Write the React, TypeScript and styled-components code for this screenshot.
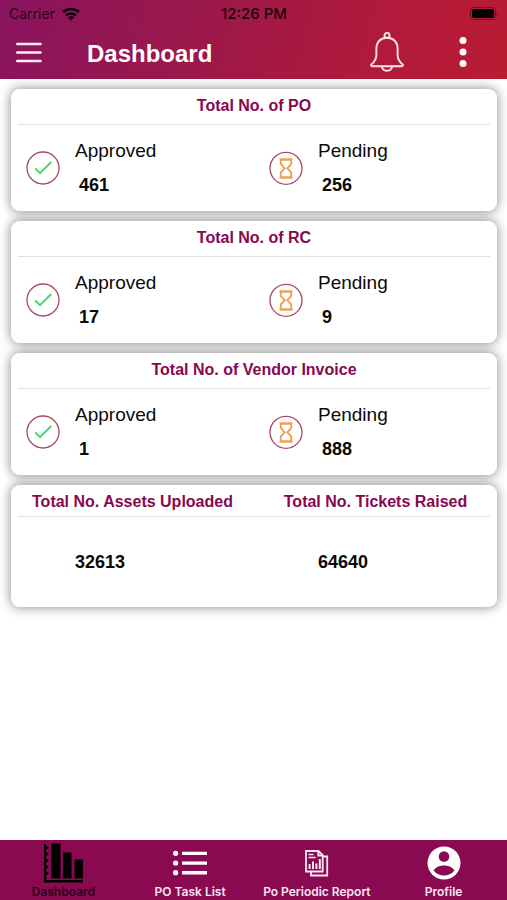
import React from "react";
import styled, { createGlobalStyle } from "styled-components";

const GlobalStyle = createGlobalStyle`
  *, *::before, *::after { box-sizing: border-box; }
  html, body, #root { height: 100%; }
  body {
    margin: 0;
    background: #fff;
    color: #0a0a0a;
    font-family: "Liberation Sans", Arial, sans-serif;
  }
`;

const Screen = styled.div`
  min-height: 100%;
  display: flex;
  flex-direction: column;
`;

const TopArea = styled.header`
  background: linear-gradient(105deg, #8a1460 0%, #9c1849 40%, #b01a3c 72%, #ba1b32 100%);
`;

const StatusBar = styled.div`
  display: grid;
  grid-template-columns: 1fr auto 1fr;
  align-items: center;
  height: 27px;
  padding: 0 8px 0 9px;
  color: rgba(0, 0, 0, 0.78);
  font-family: Inter, sans-serif;
  font-size: 14px;
`;

const Carrier = styled.span`
  display: flex;
  align-items: center;
  gap: 7px;
`;

const Clock = styled.time`
  color: #1c0410;
  font-size: 15px;
  font-weight: 500;
`;

const BatterySlot = styled.span`
  display: flex;
  justify-content: flex-end;
`;

const AppBar = styled.div`
  display: flex;
  align-items: center;
  height: 52px;
  padding: 0 40px 2px 16px;
`;

const Title = styled.h1`
  flex: 1;
  margin: 0;
  padding: 3px 0 0 45px;
  color: #fff;
  font-size: 24px;
  line-height: 28px;
`;

const IconButton = styled.button`
  display: flex;
  justify-content: center;
  padding: 0;
  border: 0;
  background: none;
  color: #fff;
  cursor: pointer;

  & + & {
    margin-left: 55px;
  }
`;

const Cards = styled.main`
  flex: 1;
  display: flex;
  flex-direction: column;
  gap: 10px;
  padding: 10px 10px 10px 11px;
  isolation: isolate;
  overflow: hidden;
`;

const Card = styled.section`
  position: relative;
  display: flex;
  flex-direction: column;
  min-height: 122px;
  border-radius: 9px;
  background: #fff;

  &::before {
    content: "";
    position: absolute;
    inset: 0;
    z-index: -1;
    border-radius: 9px;
    box-shadow: 0 0 11px 1px rgba(0, 0, 0, 0.42);
  }
`;

const CardHead = styled.div<{ $short?: boolean }>`
  display: grid;
  grid-auto-columns: 1fr;
  grid-auto-flow: column;
  align-items: start;
  height: ${(p) => (p.$short ? 31 : 35)}px;
  padding-top: 7px;
`;

const Rule = styled.hr`
  width: calc(100% - 14px);
  height: 1px;
  margin: 0 7px;
  border: 0;
  background: #e2e2e2;
`;

const CardTitle = styled.h2`
  margin: 0;
  color: #880850;
  font-size: 16px;
  line-height: 20px;
  text-align: center;
`;

const Stats = styled.div`
  flex: 1;
  display: grid;
  grid-template-columns: 1fr 1fr;
  align-items: center;
`;

const Stat = styled.div`
  display: flex;
  align-items: center;
  gap: 15px;
  padding-left: 15px;
`;

const StatText = styled.dl`
  margin: 0;
  line-height: 34px;
`;

const StatLabel = styled.dt`
  font-size: 19px;
`;

const StatValue = styled.dd`
  margin: 0;
  padding-left: 4px;
  font-size: 18px;
  font-weight: 700;
`;

const Total = styled.p`
  margin: 0;
  padding-left: 64px;
  font-size: 18px;
  font-weight: 700;
`;

const TabBar = styled.nav`
  display: grid;
  grid-template-columns: repeat(4, 1fr);
  height: 60px;
  background: #8a0a52;
`;

const Tab = styled.a<{ $active?: boolean }>`
  display: flex;
  flex-direction: column;
  align-items: center;
  justify-content: flex-end;
  color: ${(p) => (p.$active ? "#000" : "#fff")};
  text-decoration: none;
`;

const TabIcon = styled.span`
  display: flex;
  align-items: center;
  justify-content: center;
  height: 40px;
`;

const TabLabel = styled.span<{ $active?: boolean }>`
  color: ${(p) => (p.$active ? "#2c0219" : "#fbe6f2")};
  font-family: Inter, sans-serif;
  font-size: 12px;
  font-weight: 600;
  line-height: 17px;
  white-space: nowrap;
`;

const WifiIcon = () => (
  <svg width="18" height="14" viewBox="0 0 18 14" fill="none" stroke="#14020c" strokeWidth="2.5" aria-hidden="true">
    <path d="M1 5.2a11.5 11.5 0 0 1 16 0" />
    <path d="M4 8.4a7.2 7.2 0 0 1 10 0" />
    <path d="M9 13.5 6 10.5a4.3 4.3 0 0 1 6 0Z" fill="#14020c" stroke="none" />
  </svg>
);

const BatteryIcon = () => (
  <svg width="29" height="14" viewBox="0 0 29 14" role="img" aria-label="Battery full">
    <rect x="0.5" y="0.5" width="25" height="12" rx="3.5" fill="none" stroke="#000" strokeOpacity="0.4" />
    <rect x="2" y="2" width="22" height="9" rx="2" fill="#000" />
    <path d="M27 5v4c1.6-.6 1.6-3.4 0-4Z" fill="#000" fillOpacity="0.4" />
  </svg>
);

const MenuIcon = () => (
  <svg width="26" height="22" viewBox="0 0 26 22" stroke="#ffeaf5" strokeWidth="2.4" strokeLinecap="round" aria-hidden="true">
    <path d="M1.2 3h23.400M1.200 11.500h23.400M1.200 20h23.400" />
  </svg>
);

const BellIcon = () => (
  <svg width="34" height="40" viewBox="0 0 34 40" fill="none" stroke="#ffe3e8" strokeWidth="1.9" strokeLinejoin="round" aria-hidden="true">
    <circle cx="17" cy="3.400" r="2.500" />
    <path d="M17 5.800C10.500 5.800 6.400 10.200 6.400 16.500V22.500C6.400 27 5.300 29.300 1.600 32.200C.7 33 1 34.300 2.300 34.300H31.700C33 34.300 33.300 33 32.400 32.200C28.700 29.300 27.600 27 27.600 22.500V16.500C27.600 10.200 23.500 5.800 17 5.800Z" />
    <path d="M12 34.500c.5 5.700 9.500 5.700 10 0" />
  </svg>
);

const MoreIcon = () => (
  <svg width="8" height="32" viewBox="0 0 8 32" fill="#fff" aria-hidden="true">
    <circle cx="4" cy="4.500" r="3.500" />
    <circle cx="4" cy="16" r="3.500" />
    <circle cx="4" cy="27.500" r="3.500" />
  </svg>
);

const ApprovedIcon = () => (
  <svg width="34" height="34" viewBox="0 0 34 34" fill="none" aria-hidden="true">
    <circle cx="17" cy="17" r="16" stroke="#a84a66" strokeWidth="1.300" />
    <path d="m9.300 17.500 4.700 4.700L25.300 11" stroke="#3fdc68" strokeWidth="2" />
  </svg>
);

const PendingIcon = () => (
  <svg width="34" height="34" viewBox="0 0 34 34" fill="none" aria-hidden="true">
    <circle cx="17" cy="17.300" r="16" stroke="#a84a66" strokeWidth="1.300" />
    <path
      d="M11.800 8.500h10.400v4.700L18.300 17.300l3.900 4.100v5.100H11.800v-5.100l3.900-4.100-3.900-4.100Z"
      stroke="#eda055"
      strokeWidth="1.900"
    />
    <path d="M10.600 8.500h12.800M10.600 26.500h12.800" stroke="#eda055" strokeWidth="1.900" />
  </svg>
);

const ChartIcon = () => (
  <svg width="40" height="40" viewBox="0 0 40 40" fill="#000" aria-hidden="true">
    <path d="M1 1h2.200v36H40V39.500H1Z" />
    <path d="M3 3l3 1.500L3 7ZM3 9l3 2-3 2ZM3 15.500l3 2-3 2ZM3 22l3 2-3 2ZM3 28.500l3 2-3 2Z" />
    <rect x="8.500" y="0.500" width="9" height="35" />
    <rect x="20" y="9.500" width="8.500" height="26" />
    <rect x="31.500" y="16.500" width="8.500" height="19" />
  </svg>
);

const ListIcon = () => (
  <svg width="34" height="26" viewBox="0 0 34 26" fill="#fff" aria-hidden="true">
    <circle cx="2.600" cy="3.300" r="2.600" />
    <circle cx="2.600" cy="13" r="2.600" />
    <circle cx="2.600" cy="22.700" r="2.600" />
    <path d="M9 1.700h25V5H9ZM9 11.400h25v3.300H9ZM9 21.100h25v3.300H9Z" />
  </svg>
);

const ReportIcon = () => (
  <svg width="24" height="27" viewBox="0 0 24 27" fill="none" stroke="#ffe6f4" strokeWidth="1.800" aria-hidden="true">
    <path d="M1 1h12.500l4.200 4.200V21.500H1Z" />
    <path d="M13.300 1v4.500h4.400" />
    <path d="M18 6.500h4.200v19H6V21.500" strokeWidth="1.800" />
    <path d="M3.500 4.500h5M3.500 7.500h7" strokeWidth="1.500" />
    <path d="M4.600 19v-5M8 19v-7.500M11.400 19v-5.500M14.800 19V9" strokeWidth="2" />
  </svg>
);

const ProfileIcon = () => (
  <svg width="34" height="34" viewBox="0 0 34 34" aria-hidden="true">
    <circle cx="17" cy="17" r="16.500" fill="#fff" />
    <circle cx="17" cy="10.500" r="5.300" fill="#8a0a52" />
    <path d="M6.500 24.500C9.500 20.300 13.500 19.500 17 19.500s7.500.8 10.500 5C24.800 28 21 29.500 17 29.500S9.200 28 6.500 24.500Z" fill="#8a0a52" />
  </svg>
);

const summaries = [
  { title: "Total No. of PO", approved: 461, pending: 256 },
  { title: "Total No. of RC", approved: 17, pending: 9 },
  { title: "Total No. of Vendor Invoice", approved: 1, pending: 888 },
];

const tabs = [
  { label: "Dashboard", Icon: ChartIcon, active: true },
  { label: "PO Task List", Icon: ListIcon },
  { label: "Po Periodic Report", Icon: ReportIcon },
  { label: "Profile", Icon: ProfileIcon },
];

export default function App() {
  return (
    <Screen>
      <GlobalStyle />
      <TopArea>
        <StatusBar>
          <Carrier>
            Carrier
            <WifiIcon />
          </Carrier>
          <Clock>12:26 PM</Clock>
          <BatterySlot>
            <BatteryIcon />
          </BatterySlot>
        </StatusBar>
        <AppBar>
          <IconButton aria-label="Open menu">
            <MenuIcon />
          </IconButton>
          <Title>Dashboard</Title>
          <IconButton aria-label="Notifications">
            <BellIcon />
          </IconButton>
          <IconButton aria-label="More options">
            <MoreIcon />
          </IconButton>
        </AppBar>
      </TopArea>

      <Cards>
        {summaries.map(({ title, approved, pending }) => (
          <Card key={title}>
            <CardHead>
              <CardTitle>{title}</CardTitle>
            </CardHead>
            <Rule />
            <Stats>
              <Stat>
                <ApprovedIcon />
                <StatText>
                  <StatLabel>Approved</StatLabel>
                  <StatValue>{approved}</StatValue>
                </StatText>
              </Stat>
              <Stat>
                <PendingIcon />
                <StatText>
                  <StatLabel>Pending</StatLabel>
                  <StatValue>{pending}</StatValue>
                </StatText>
              </Stat>
            </Stats>
          </Card>
        ))}
        <Card>
          <CardHead $short>
            <CardTitle>Total No. Assets Uploaded</CardTitle>
            <CardTitle>Total No. Tickets Raised</CardTitle>
          </CardHead>
          <Rule />
          <Stats>
            <Total>32613</Total>
            <Total>64640</Total>
          </Stats>
        </Card>
      </Cards>

      <TabBar aria-label="Main">
        {tabs.map(({ label, Icon, active }) => (
          <Tab key={label} href="#" $active={active} aria-current={active ? "page" : undefined}>
            <TabIcon>
              <Icon />
            </TabIcon>
            <TabLabel $active={active}>{label}</TabLabel>
          </Tab>
        ))}
      </TabBar>
    </Screen>
  );
}
